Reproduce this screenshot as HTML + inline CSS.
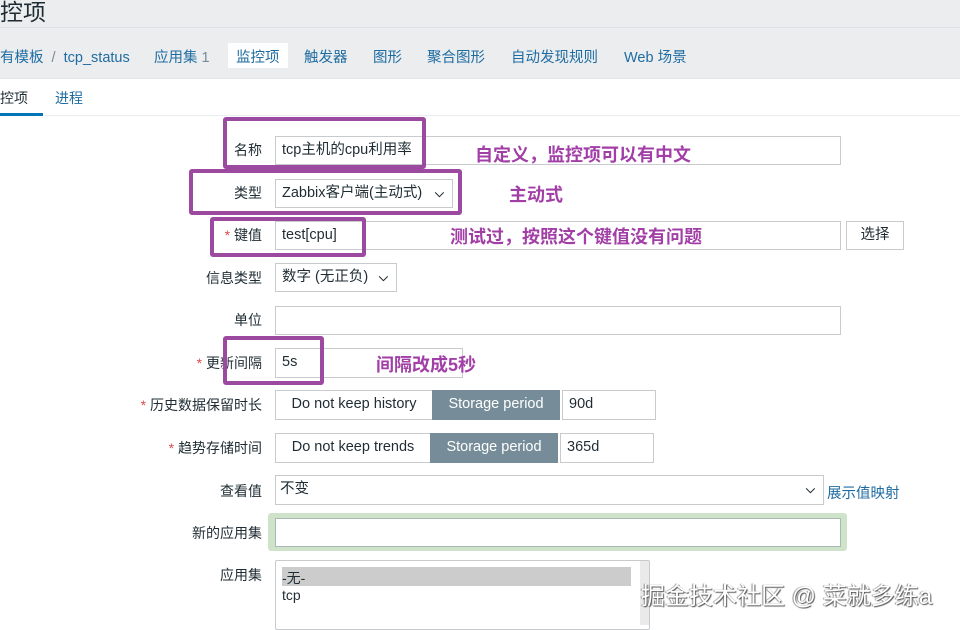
<!DOCTYPE html>
<html><head><meta charset="utf-8"><style>
body{margin:0;width:960px;height:625px;overflow:hidden;background:#fff;font-family:"Liberation Sans","Noto Sans CJK SC",sans-serif;font-size:14px;color:#1f2c33;position:relative}
.a{position:absolute}
.hdr{left:0;top:0;width:960px;height:78px;background:#ebedef;border-bottom:1px solid #dfe4e7}
.nav{color:#1f6ca1;font-size:14.5px;top:46px}
.lbl{right:698px;text-align:right;white-space:nowrap}
.in{background:#fff;border:1px solid #c7cbcd;box-sizing:border-box;padding-left:6px;line-height:26px;white-space:nowrap;font-size:14.5px}
.st{color:#d64e4e}
.pb{border:4px solid #9b4aa0;border-radius:3px;box-sizing:border-box}
.ann{color:#a23fa7;font-weight:bold;font-size:18px;white-space:nowrap}
.chev{position:absolute;right:8px;top:0;font-size:12px;font-weight:bold}
.dk{background:#768d99;color:#fff;text-align:center;line-height:29px;box-sizing:border-box;font-size:14.5px}
.lt{background:#fff;border:1px solid #c7cbcd;text-align:center;line-height:27px;box-sizing:border-box;font-size:14.5px}
</style></head><body>
<div class="a hdr"></div>
<div class="a" style="left:0;top:27px;width:960px;height:1px;background:#dfe2e4"></div>
<div class="a" style="left:0;top:-7px;font-size:23px;color:#1f2c33">控项</div>
<div class="a nav" style="left:0">有模板 <span style="color:#768d99">&nbsp;/&nbsp;</span> tcp_status</div>
<div class="a nav" style="left:154px">应用集 <span style="color:#768d99">1</span></div>
<div class="a" style="left:228px;top:43px;width:60px;height:25px;background:#fff"></div>
<div class="a nav" style="left:236px">监控项</div>
<div class="a nav" style="left:304px">触发器</div>
<div class="a nav" style="left:373px">图形</div>
<div class="a nav" style="left:427px">聚合图形</div>
<div class="a nav" style="left:511px">自动发现规则</div>
<div class="a nav" style="left:624px">Web 场景</div>
<div class="a" style="left:0;top:88px;color:#1f2c33">控项</div>
<div class="a" style="left:55px;top:88px;color:#1f6ca1">进程</div>
<div class="a" style="left:0;top:113px;width:43px;height:3px;background:#0275b8"></div>
<div class="a" style="left:45px;top:115px;width:915px;height:1px;background:#ebeef0"></div>

<div class="a lbl" style="top:140px">名称</div>
<div class="a in" style="left:275px;top:136px;width:566px;height:29px">tcp主机的cpu利用率</div>
<div class="a lbl" style="top:183px">类型</div>
<div class="a in" style="left:275px;top:179px;width:178px;height:29px">Zabbix客户端(主动式)<span class="chev">⌵</span></div>
<div class="a lbl" style="top:225px"><span class="st">*</span> 键值</div>
<div class="a in" style="left:275px;top:221px;width:566px;height:29px">test[cpu]</div>
<div class="a in" style="left:846px;top:221px;width:58px;height:29px;text-align:center;padding:0">选择</div>
<div class="a lbl" style="top:268px">信息类型</div>
<div class="a in" style="left:275px;top:263px;width:122px;height:29px">数字 (无正负)<span class="chev">⌵</span></div>
<div class="a lbl" style="top:310px">单位</div>
<div class="a in" style="left:275px;top:306px;width:566px;height:29px"></div>
<div class="a lbl" style="top:353px"><span class="st">*</span> 更新间隔</div>
<div class="a in" style="left:275px;top:348px;width:188px;height:30px">5s</div>
<div class="a lbl" style="top:395px"><span class="st">*</span> 历史数据保留时长</div>
<div class="a lt" style="left:275px;top:390px;width:158px;height:30px">Do not keep history</div>
<div class="a dk" style="left:432px;top:390px;width:128px;height:30px">Storage period</div>
<div class="a in" style="left:562px;top:390px;width:94px;height:30px">90d</div>
<div class="a lbl" style="top:438px"><span class="st">*</span> 趋势存储时间</div>
<div class="a lt" style="left:275px;top:433px;width:156px;height:30px">Do not keep trends</div>
<div class="a dk" style="left:430px;top:433px;width:128px;height:30px">Storage period</div>
<div class="a in" style="left:560px;top:433px;width:94px;height:30px">365d</div>
<div class="a lbl" style="top:481px">查看值</div>
<div class="a in" style="left:275px;top:475px;width:549px;height:30px;padding-left:4px">不变<span class="chev">⌵</span></div>
<div class="a" style="left:827px;top:482px;color:#1f6ca1;font-size:14.5px">展示值映射</div>
<div class="a" style="left:268px;top:513px;width:579px;height:38px;background:#cfe3cb;border-radius:3px"></div>
<div class="a in" style="left:275px;top:518px;width:566px;height:29px;border-color:#a9b9b0"></div>
<div class="a lbl" style="top:523px">新的应用集</div>
<div class="a lbl" style="top:565px">应用集</div>
<div class="a" style="left:275px;top:560px;width:375px;height:70px;border:1px solid #c7cbcd;box-sizing:border-box;border-radius:2px"></div>
<div class="a" style="left:640px;top:561px;width:9px;height:64px;background:#eaeaea"></div>
<div class="a" style="left:282px;top:567px;width:349px;height:19px;background:#cccccc"></div>
<div class="a" style="left:282px;top:568px">-无-</div>
<div class="a" style="left:282px;top:587px">tcp</div>

<div class="a pb" style="left:223px;top:117px;width:203px;height:52px"></div>
<div class="a pb" style="left:189px;top:169px;width:273px;height:46px"></div>
<div class="a pb" style="left:210px;top:217px;width:156px;height:40px"></div>
<div class="a pb" style="left:223px;top:336px;width:101px;height:49px"></div>
<div class="a ann" style="left:475px;top:141px">自定义，监控项可以有中文</div>
<div class="a ann" style="left:509px;top:181px">主动式</div>
<div class="a ann" style="left:450px;top:223px">测试过，按照这个键值没有问题</div>
<div class="a ann" style="left:376px;top:351px">间隔改成5秒</div>
<div class="a" style="left:641px;top:576px;font-size:24px;color:#fff;text-shadow:1px 1px 1px #555,-1px 0 1px #888;white-space:nowrap">掘金技术社区 @ 菜就多练a</div>
</body></html>
